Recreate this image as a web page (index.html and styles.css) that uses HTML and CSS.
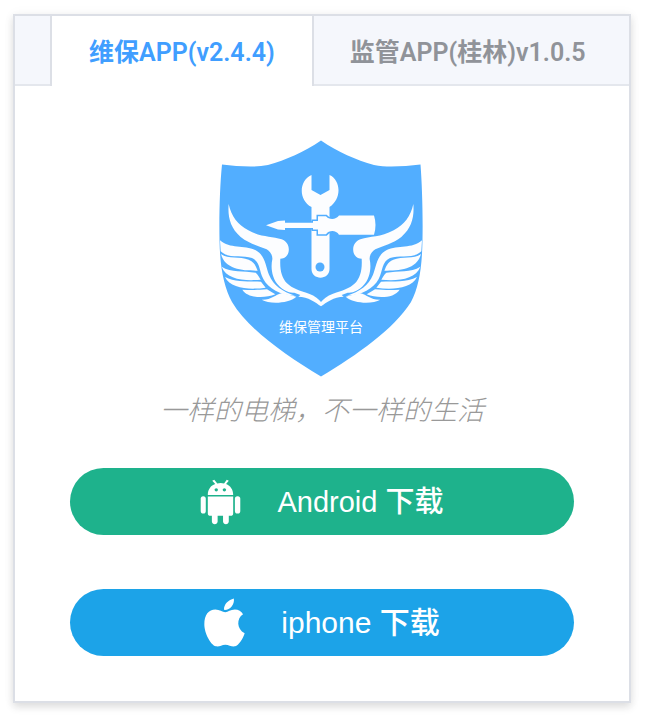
FILE: index.html
```html
<!DOCTYPE html>
<html lang="zh-CN">
<head>
<meta charset="utf-8">
<title>维保APP</title>
<link rel="stylesheet" href="styles.css">
</head>
<body>
<main class="card">
  <div class="tabs" role="tablist">
    <button class="tab tab-active" type="button" role="tab" aria-selected="true">维保APP(v2.4.4)</button>
    <button class="tab" type="button" role="tab" aria-selected="false">监管APP(桂林)v1.0.5</button>
  </div>
  <section class="panel" role="tabpanel">
    <svg class="shield" viewBox="219 140 207 237" role="img">
      <defs>
        <g id="wing">
          <path d="M41 12C49 50 68 73 100 91C140 113 170 108 200 118C222 126 226 150 217 165C212 174 203 176 196 176C194 210 200 232 216 250C232 266 254 272 282 281C300 287 312 299 318 306V319C303 308 279 290 250 290L256 285L238 278C222 280 205 271 193 259C169 235 167 200 172 178C173 167 168 157 155 148C130 137 102 131 77 111C45 83 38 50 41 12Z"/>
          <path d="M15 121C45 148 86 134 122 151C151 166 152 200 162 224C175 256 202 274 240 287C196 286 160 265 145 237C131 210 137 187 111 174C82 164 41 178 17 154Z"/>
          <path d="M18 162C40 178 75 169 101 179C120 187 122 199 128 212C84 212 30 209 18 162Z"/>
          <path d="M20 200C48 218 87 212 122 218C129 224 132 231 137 239C88 244 34 238 20 200Z"/>
          <path d="M30 231C61 248 100 243 138 245L152 263C105 270 46 266 30 231Z"/>
          <path d="M82 269C110 271 130 270 156 268C164 273 172 278 181 283C148 296 98 295 82 269Z"/>
          <path d="M140 299C170 300 178 285 202 279L244 290C220 311 164 313 140 299Z"/>
        </g>
      </defs>
      <path fill="#52aeff" d="M321 140.500C304 152 286 160 268 165C253 168 237 166 222 164.500C220 184 219 214 219.500 240C220 268 224 287 232 302C248 329 285 355 321 376.500C357 355 394 329 411 302C419 287 422 268 422.500 240C423 214 422 184 420.500 164.500C405 166 389 168 374 165C356 160 338 152 321 140.500Z"/>
      <g fill="#fcfdff">
        <path d="M311.500 175V190L320.500 195L329.500 190V175C341 180 342 199 329.500 207V269C329.500 280.500 311.500 280.500 311.500 269V207C298.500 200 298.500 181 311.500 175Z"/>
        <path stroke="#52aeff" stroke-width="3" paint-order="stroke" d="M266 225.300L278 221L285 220.500V222.700H313V221H318V216.200H326C329 220 336 220 339 215.500H374Q377 225 374 234.700H339C336 230 329 230 326 234.300H318V229.500H313V228H285V230L278 229.500Z"/>
        <g transform="translate(215 200) scale(.333333)"><use href="#wing"/></g>
        <g transform="translate(427 200) scale(-.333333 .333333)"><use href="#wing"/></g>
      </g>
      <circle cx="320" cy="267" r="4.500" fill="#52aeff"/>
      <text class="shield-text" x="321" y="332">维保管理平台</text>
    </svg>
    <p class="slogan">一样的电梯，不一样的生活</p>
    <div class="downloads">
      <a class="download android" href="#android">
        <svg class="icon" viewBox="424 56 121 136" aria-hidden="true">
          <g fill="#fff">
            <path d="M447 103C447 87 456 75 469 71L460 61L466 58L475 69Q485 66 495 69L503 58L509 61L501 71C514 76 522 88 522 103Z"/>
            <path d="M447 108H522V157Q522 165 514 165H509V182C509 192 492 192 492 182V165H476V182C476 192 459 192 459 182V165H455Q447 165 447 157Z"/>
            <rect x="426" y="107" width="15" height="51" rx="7.500"/>
            <rect x="527" y="107" width="16" height="51" rx="7.500"/>
          </g>
          <g fill="#1eb28c"><circle cx="472" cy="88" r="5"/><circle cx="496" cy="88" r="5"/></g>
        </svg>
        <span>Android 下载</span>
      </a>
      <a class="download iphone" href="#iphone">
        <svg class="icon" viewBox="431 52 125 149" aria-hidden="true">
          <path fill="#fff" d="M522 53C525 72 509 90 492 88C491 70 506 57 522 53ZM550 101C530 113 530 146 555 159C548 179 537 195 526 199C514 201 508 194 496 194C484 194 479 201 467 199C452 196 432 160 432 132C432 103 445 87 466 87C478 87 487 95 496 95C504 95 512 87 525 87C536 87 545 93 550 101Z"/>
        </svg>
        <span>iphone 下载</span>
      </a>
    </div>
  </section>
</main>
</body>
</html>
```
FILE: styles.css
```css
* {
  box-sizing: border-box;
}

body {
  margin: 0;
  padding: 14px 15px 20px 13px;
  background: #fff;
  font-family: "Liberation Sans", "Noto Sans CJK SC", sans-serif;
}

.card {
  border: 2px solid #dcdfe6;
  background: #fff;
  box-shadow: 0 4px 8px rgba(0, 0, 0, .12), 0 0 12px rgba(0, 0, 0, .04);
}

.tabs {
  display: flex;
  height: 70px;
  padding-left: 35px;
  background: #f5f7fc;
  box-shadow: inset 0 -2px #e4e7ed;
}

.tab {
  padding: 0 36px 2px;
  border: 0 solid #dcdfe6;
  background: transparent;
  color: #909399;
  font-family: Roboto, "Noto Sans CJK SC", sans-serif;
  font-size: 25px;
  font-weight: 600;
  white-space: nowrap;
}

.tab-active {
  padding: 0 37px 2px;
  border-width: 0 2px;
  background: #fff;
  color: #409eff;
}

.panel {
  padding: 54px 55px 45px;
}

.shield {
  display: block;
  width: 207px;
  height: 237px;
  margin: 0 auto;
}

.shield-text {
  fill: #fff;
  font-family: "Noto Sans CJK SC", sans-serif;
  font-size: 14px;
  text-anchor: middle;
}

.slogan {
  margin: 12px 0 39px;
  color: #999;
  font-family: "Noto Sans CJK SC", sans-serif;
  font-size: 27px;
  font-style: italic;
  font-weight: 300;
  line-height: 40px;
  text-align: center;
  white-space: nowrap;
}

.downloads {
  display: flex;
  flex-direction: column;
  gap: 54px;
}

.download {
  display: flex;
  align-items: center;
  justify-content: center;
  gap: 36px;
  height: 67px;
  border-radius: 34px;
  color: #fff;
  font-size: 29px;
  font-weight: 500;
  line-height: 40px;
  text-decoration: none;
}

.android {
  background: #1eb28c;
}

.iphone {
  background: #1ca3e8;
  font-size: 30px;
}

.icon {
  width: 41px;
  height: 49px;
}

.android .icon {
  height: 46px;
}
```
